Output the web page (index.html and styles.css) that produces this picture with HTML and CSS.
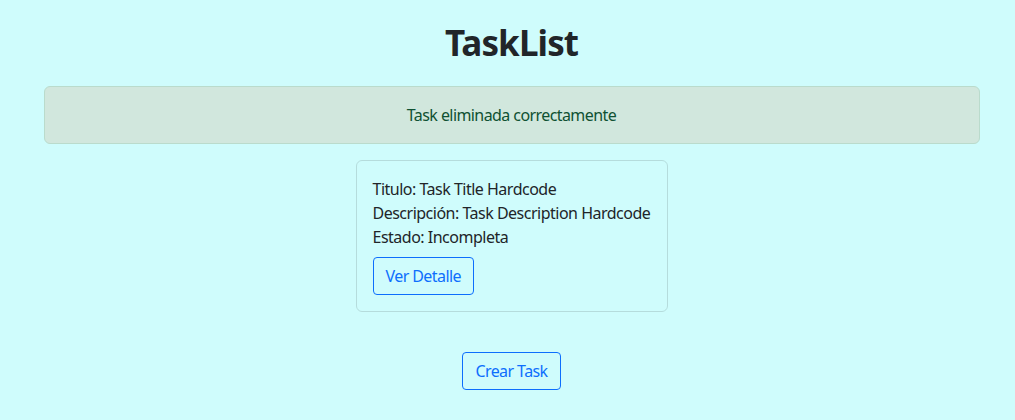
FILE: index.html
```html
<!DOCTYPE html>
<html lang="es">
<head>
<meta charset="utf-8">
<title>TaskList</title>
<link rel="stylesheet" href="styles.css">
</head>
<body>
<div class="page">
  <div class="container">
    <h1 class="title">TaskList</h1>
    <div class="alert">Task eliminada correctamente</div>
    <div class="card">
      <p class="line">Titulo: Task Title Hardcode</p>
      <p class="line">Descripción: Task Description Hardcode</p>
      <p class="line">Estado: Incompleta</p>
      <button class="btn btn-detail">Ver Detalle</button>
    </div>
    <div class="actions">
      <button class="btn">Crear Task</button>
    </div>
  </div>
</div>
</body>
</html>
```
FILE: styles.css
```css
html, body {
  margin: 0;
  padding: 0;
  background: #cffcfc;
}
body {
  font-family: "Noto Sans", "Open Sans", sans-serif;
  font-size: 16px;
  line-height: 1.5;
  color: #212529;
  letter-spacing: -0.58px;
}
.page {
  padding-left: 8px;
}
.container {
  width: 936px;
  margin: 0 auto;
  display: flex;
  flex-direction: column;
  align-items: center;
}
.title {
  margin: 22px 0 22px;
  font-size: 35px;
  line-height: 1.2;
  font-weight: 700;
  letter-spacing: -0.9px;
}
.alert {
  box-sizing: border-box;
  width: 100%;
  padding: 16px;
  border: 1px solid #badbcc;
  border-radius: 6px;
  background: #d1e7dd;
  color: #0f5132;
  text-align: center;
  margin-bottom: 16px;
}
.card {
  box-sizing: border-box;
  width: 312px;
  padding: 16px;
  border: 1px solid rgba(0, 0, 0, 0.125);
  border-radius: 6px;
}
.line {
  margin: 0;
  white-space: nowrap;
  letter-spacing: -0.5px;
}
.btn {
  font-family: inherit;
  font-size: 16px;
  line-height: 1.5;
  letter-spacing: inherit;
  padding: 6px 12px;
  color: #0d6efd;
  background: transparent;
  border: 1px solid #0d6efd;
  border-radius: 4px;
  cursor: pointer;
}
.btn-detail {
  margin-top: 8px;
}
.actions {
  margin-top: 40px;
}
```
